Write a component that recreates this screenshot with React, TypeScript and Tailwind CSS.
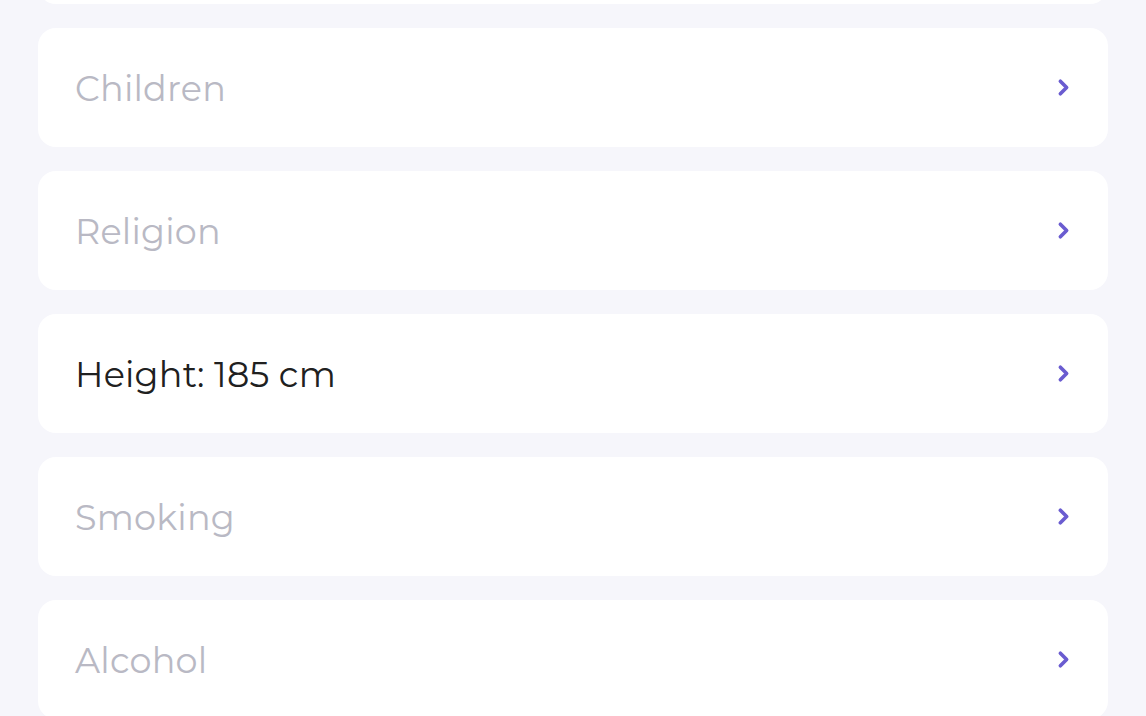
import { ChevronRight } from "lucide-react";

const rows = [
  { label: "", filled: false },
  { label: "Children", filled: false },
  { label: "Religion", filled: false },
  { label: "Height: 185 cm", filled: true },
  { label: "Smoking", filled: false },
  { label: "Alcohol", filled: false },
];

export default function App() {
  return (
    <div className="h-[716px] w-full overflow-hidden bg-[#f6f6fb] px-[38px] font-['Montserrat','Open_Sans',sans-serif]">
      <div className="-mt-[115px] flex flex-col gap-6">
        {rows.map((row, i) => (
          <div
            key={i}
            className="flex h-[119px] items-center justify-between rounded-[18px] bg-white pl-[37px] pr-[32px]"
          >
            <span
              className={
                row.filled
                  ? "pt-[4px] text-[35px] tracking-[0.2px] text-[#202020]"
                  : "pt-[4px] text-[35px] tracking-[0.2px] text-[#b9b9c4]"
              }
            >
              {row.label}
            </span>
            <ChevronRight className="h-[25px] w-[25px] text-[#6a5cd0]" strokeWidth={3.5} />
          </div>
        ))}
      </div>
    </div>
  );
}
